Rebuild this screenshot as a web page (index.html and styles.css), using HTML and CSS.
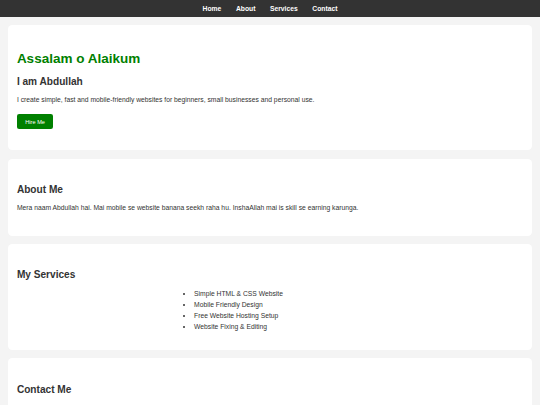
FILE: index.html
```html
<!DOCTYPE html>
<html lang="en">
<head>
<meta charset="utf-8">
<title>Abdullah</title>
<link rel="stylesheet" href="styles.css">
</head>
<body>
<nav class="nav">
  <a class="nav-link" href="#home">Home</a>
  <a class="nav-link" href="#about">About</a>
  <a class="nav-link" href="#services">Services</a>
  <a class="nav-link" href="#contact">Contact</a>
</nav>

<section class="card" id="home">
  <h1 class="title">Assalam o Alaikum</h1>
  <h2 class="heading">I am Abdullah</h2>
  <p class="text">I create simple, fast and mobile-friendly websites for beginners, small businesses and personal use.</p>
  <button class="btn">Hire Me</button>
</section>

<section class="card" id="about">
  <h2 class="heading">About Me</h2>
  <p class="text">Mera naam Abdullah hai. Mai mobile se website banana seekh raha hu. InshaAllah mai is skill se earning karunga.</p>
</section>

<section class="card" id="services">
  <h2 class="heading">My Services</h2>
  <ul class="list">
    <li class="list-item">Simple HTML &amp; CSS Website</li>
    <li class="list-item">Mobile Friendly Design</li>
    <li class="list-item">Free Website Hosting Setup</li>
    <li class="list-item">Website Fixing &amp; Editing</li>
  </ul>
</section>

<section class="card" id="contact">
  <h2 class="heading">Contact Me</h2>
</section>
</body>
</html>
```

FILE: styles.css
```css
html, body {
  margin: 0;
  padding: 0;
}

body {
  background: #f4f4f4;
  font-family: "Liberation Sans", Arial, sans-serif;
  font-size: 6.75px;
  line-height: 7.76px;
  color: #333;
}

.nav {
  background: #333;
  padding: 4.5px 0;
  text-align: center;
}

.nav-link {
  color: #fff;
  font-weight: bold;
  text-decoration: none;
  margin: 0 6.33px;
}

.card {
  background: #fff;
  margin: 8.44px;
  padding: 16.875px 8.44px;
  border-radius: 4.22px;
}

.title {
  color: #008000;
  font-size: 13.5px;
  line-height: 15.5px;
  margin: 9.04px 0;
}

.heading {
  font-size: 10.125px;
  line-height: 11.65px;
  margin: 8.4px 0;
  color: #333;
}

.text {
  margin: 6.75px 0;
}

.btn {
  display: inline-block;
  background: #008000;
  color: #fff;
  border: none;
  padding: 4.22px 8.44px;
  border-radius: 2.1px;
  font-family: "Liberation Sans", Arial, sans-serif;
  font-size: 5.625px;
  line-height: 6.47px;
  margin: 4.22px 0;
}

.list {
  max-width: 168.75px;
  margin: 0 auto;
  padding-left: 16.875px;
}

.list-item {
  line-height: 10.9px;
}
```
